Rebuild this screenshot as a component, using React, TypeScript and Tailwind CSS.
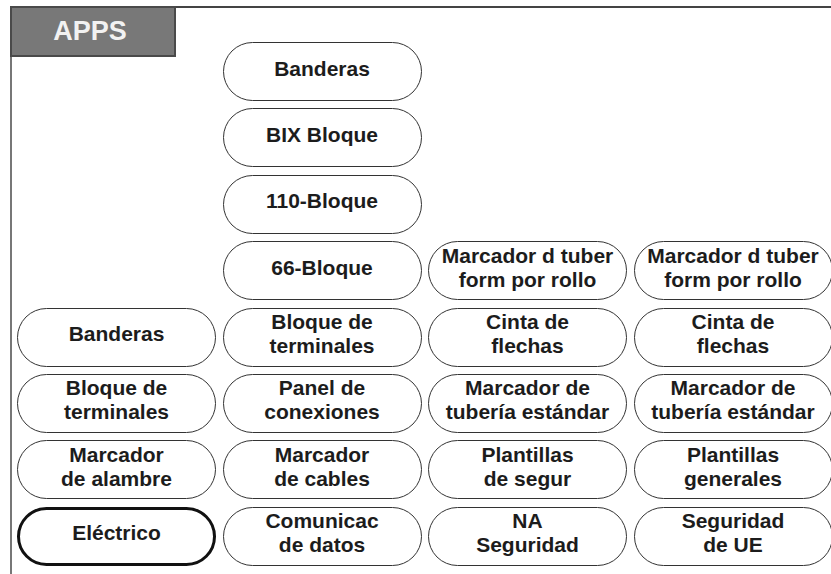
import React from "react";

type Cell = { text: string; bold?: boolean } | null;

const rows: Cell[][] = [
  [null, { text: "Banderas" }, null, null],
  [null, { text: "BIX Bloque" }, null, null],
  [null, { text: "110-Bloque" }, null, null],
  [null, { text: "66-Bloque" }, { text: "Marcador d tuber\nform por rollo" }, { text: "Marcador d tuber\nform por rollo" }],
  [{ text: "Banderas" }, { text: "Bloque de\nterminales" }, { text: "Cinta de\nflechas" }, { text: "Cinta de\nflechas" }],
  [{ text: "Bloque de\nterminales" }, { text: "Panel de\nconexiones" }, { text: "Marcador de\ntubería estándar" }, { text: "Marcador de\ntubería estándar" }],
  [{ text: "Marcador\nde alambre" }, { text: "Marcador\nde cables" }, { text: "Plantillas\nde segur" }, { text: "Plantillas\ngenerales" }],
  [{ text: "Eléctrico", bold: true }, { text: "Comunicac\nde datos" }, { text: "NA\nSeguridad" }, { text: "Seguridad\nde UE" }],
];

function Pill({ cell }: { cell: Cell }) {
  if (!cell) return <div />;
  return (
    <div
      className={
        cell.bold
          ? "flex flex-col items-center justify-center rounded-full border-[3px] border-[#111] bg-white pb-[6px] text-center text-[21px] font-bold leading-[24px] text-[#1c1c1c]"
          : "flex flex-col items-center justify-center rounded-full border-[1.5px] border-[#333] bg-white pb-[6px] text-center text-[21px] font-bold leading-[24px] text-[#1c1c1c]"
      }
    >
      {cell.text.split("\n").map((l, i) => (
        <span key={i} className="whitespace-nowrap">
          {l}
        </span>
      ))}
    </div>
  );
}

export default function App() {
  return (
    <div
      className="h-[574px] w-[831px] overflow-hidden bg-white"
      style={{ fontFamily: '"Liberation Sans", Arial, sans-serif' }}
    >
      <div className="relative ml-[10px] mt-[6px] h-[600px] border-l-2 border-t-2 border-l-[#777] border-t-[#444] pl-[5px] pt-[34px]">
        <div className="absolute left-[-2px] top-[-2px] flex h-[51px] w-[166px] justify-center border-2 border-[#4a4a4a] bg-[#787878] pr-[6px] pt-[10px]">
          <span className="text-[27px] font-bold leading-none text-[#f2f2f2]">APPS</span>
        </div>
        <div className="grid grid-cols-[repeat(4,199px)] auto-rows-[59px] gap-x-[6.5px] gap-y-[7.4px]">
          {rows.flatMap((r, ri) => r.map((c, ci) => <Pill key={`${ri}-${ci}`} cell={c} />))}
        </div>
      </div>
    </div>
  );
}
